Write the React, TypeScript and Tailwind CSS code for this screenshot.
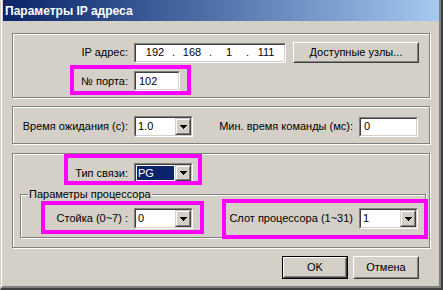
import React from 'react';

// sunken edit frame, classic windows look
function Edit({ className = '', children }: { className?: string; children?: React.ReactNode }) {
  return (
    <div className={`border border-t-[#808080] border-l-[#808080] border-r-white border-b-white ${className}`}>
      <div className="h-full flex items-center border border-t-[#404040] border-l-[#404040] border-r-[#d4d0c8] border-b-[#d4d0c8] bg-white">
        {children}
      </div>
    </div>
  );
}

function Button({ className = '', children }: { className?: string; children?: React.ReactNode }) {
  return (
    <div className={`border border-t-white border-l-white border-r-[#404040] border-b-[#404040] ${className}`}>
      <div className="h-full flex items-center justify-center border border-t-[#d4d0c8] border-l-[#d4d0c8] border-r-[#808080] border-b-[#808080]">
        {children}
      </div>
    </div>
  );
}

function Combo({ value, selected = false, className = '' }: { value: string; selected?: boolean; className?: string }) {
  return (
    <Edit className={className}>
      <div className="flex-1 h-full p-px">
        <div className={`h-full flex items-center pl-[1px] ${selected ? 'bg-[#0a246a] text-white' : ''}`}>{value}</div>
      </div>
      <div className="w-[16px] h-full border border-t-[#d4d0c8] border-l-[#d4d0c8] border-r-[#404040] border-b-[#404040]">
        <div className="h-full flex items-center justify-center bg-[#d4d0c8] border border-t-white border-l-white border-r-[#808080] border-b-[#808080]">
          <svg width="7" height="4" viewBox="0 0 7 4" shapeRendering="crispEdges">
            <path d="M0 0h7v1H0zM1 1h5v1H1zM2 2h3v1H2zM3 3h1v1H3z" fill="#000" />
          </svg>
        </div>
      </div>
    </Edit>
  );
}

const groupCls = 'w-[418px] border border-[#808080] shadow-[inset_1px_1px_0_#fff,1px_1px_0_#fff]';

export default function App() {
  return (
    <div className="relative w-[443px] h-[290px] bg-[#d4d0c8] border-l border-l-[#d4d0c8] border-r-2 border-b-2 border-r-[#404040] border-b-[#404040] text-[11px] leading-[13px] text-black font-['Liberation_Sans','Arial',sans-serif]">
      <div className="h-full flex flex-col pl-px border-l border-l-white border-r-2 border-b-2 border-r-[#808080] border-b-[#808080]">
        {/* заголовок */}
        <div className="h-[21px] shrink-0 flex items-center pl-[2px] pt-[1px] bg-linear-to-r from-[#0a246a] to-[#a6caf0] text-white font-bold text-[12px]">
          Параметры IP адреса
        </div>

        <div className="flex flex-col pl-[9px] pt-[12px]">
          {/* IP и порт */}
          <div className={`${groupCls} h-[65px] pt-[8px]`}>
            <div className="flex items-center h-[21px]">
              <div className="w-[115px] text-right">IP адрес:</div>
              <Edit className="ml-[6px] w-[152px] h-[20px]">
                <div className="flex pl-[5px]">
                  <span className="w-[28px] text-center">192</span>
                  <span className="w-[9px] text-center">.</span>
                  <span className="w-[28px] text-center">168</span>
                  <span className="w-[9px] text-center">.</span>
                  <span className="w-[28px] text-center">1</span>
                  <span className="w-[9px] text-center">.</span>
                  <span className="w-[28px] text-center">111</span>
                </div>
              </Edit>
              <Button className="ml-[7px] w-[126px] h-[21px]">Доступные узлы...</Button>
            </div>
            <div className="flex items-center h-[20px] mt-[8px]">
              <div className="w-[115px] text-right">№ порта:</div>
              <Edit className="ml-[6px] w-[46px] h-[20px]">
                <span className="pl-[3px]">102</span>
              </Edit>
            </div>
          </div>

          {/* тайм-ауты */}
          <div className={`${groupCls} h-[38px] mt-[8px] pt-[9px]`}>
            <div className="flex items-center h-[21px]">
              <div className="w-[115px] text-right">Время ожидания (с):</div>
              <Combo className="ml-[6px] w-[59px] h-[21px]" value="1.0" />
              <div className="w-[160px] text-right">Мин. время команды (мс):</div>
              <Edit className="ml-[6px] w-[59px] h-[20px]">
                <span className="pl-[3px]">0</span>
              </Edit>
            </div>
          </div>

          {/* связь и процессор */}
          <div className={`${groupCls} h-[95px] mt-[9px] pt-[9px] flex flex-col`}>
            <div className="flex items-center h-[20px]">
              <div className="w-[115px] text-right">Тип связи:</div>
              <Combo className="ml-[6px] w-[59px] h-[20px]" value="PG" selected />
            </div>
            <div className="relative ml-[7px] mt-[11px] w-[406px] h-[44px] border border-[#808080] shadow-[inset_1px_1px_0_#fff,1px_1px_0_#fff] pt-[13px]">
              <div className="absolute left-[7px] -top-[7px] px-px bg-[#d4d0c8]">Параметры процессора</div>
              <div className="flex items-center h-[21px]">
                <div className="w-[107px] text-right">Стойка (0~7) :</div>
                <Combo className="ml-[6px] w-[59px] h-[21px]" value="0" />
                <div className="w-[160px] text-right">Слот процессора (1~31)</div>
                <Combo className="ml-[6px] w-[59px] h-[21px]" value="1" />
              </div>
            </div>
          </div>

          {/* кнопки */}
          <div className="w-[418px] mt-[8px] flex justify-end gap-[5px] pr-[11px]">
            <div className="w-[66px] h-[23px] border border-black">
              <Button className="h-full">OK</Button>
            </div>
            <Button className="w-[66px] h-[23px]">Отмена</Button>
          </div>
        </div>
      </div>

      {/* пометки */}
      <div className="absolute pointer-events-none left-[69px] top-[65px] w-[121px] h-[30px] border-[4px] border-[#ff00ff]" />
      <div className="absolute pointer-events-none left-[63px] top-[154px] w-[138px] h-[31px] border-[4px] border-[#ff00ff]" />
      <div className="absolute pointer-events-none left-[40px] top-[201px] w-[163px] h-[33px] border-[4px] border-[#ff00ff]" />
      <div className="absolute pointer-events-none left-[221px] top-[199px] w-[206px] h-[40px] border-[4px] border-[#ff00ff]" />
    </div>
  );
}
